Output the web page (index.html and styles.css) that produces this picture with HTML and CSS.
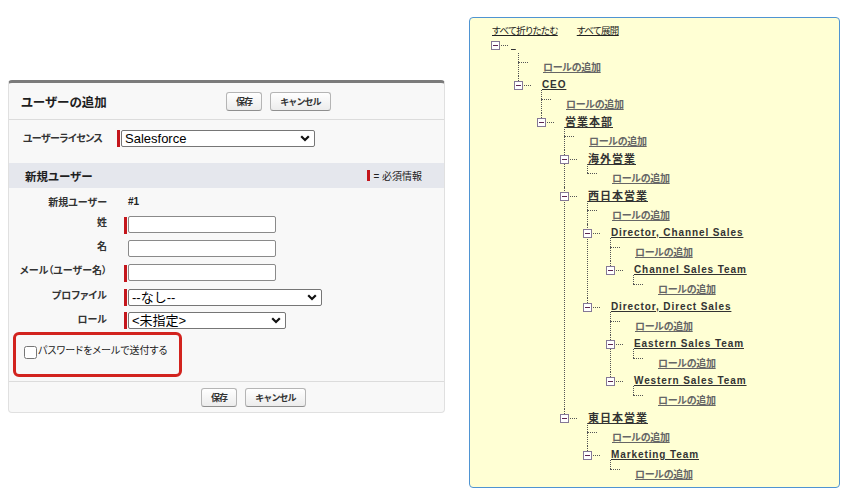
FILE: index.html
```html
<!DOCTYPE html>
<html>
<head>
  <meta charset="UTF-8">
  <title>ユーザーの追加</title>
  <link rel="stylesheet" href="styles.css">
</head>
<body>
  <div class="page">
    <div class="panel">
      <div class="panel-head">
        <h2 class="panel-title">ユーザーの追加</h2>
        <div class="btns">
          <button class="btn">保存</button>
          <button class="btn">キャンセル</button>
        </div>
      </div>

      <div class="license-row">
        <label class="license-label">ユーザーライセンス</label>
        <div class="val">
          <div class="select w-license">
            <select><option>Salesforce</option></select>
            <svg class="chev" width="10" height="7" viewBox="0 0 10 7"><path d="M1.2 1.2l3.8 3.8 3.8-3.8" fill="none" stroke="#111" stroke-width="2.2"/></svg>
          </div>
        </div>
      </div>

      <div class="section-bar">
        <h3>新規ユーザー</h3>
        <span class="legend"><i class="legend-bar"></i>= 必須情報</span>
      </div>

      <div class="fields">
        <div class="lbl first">新規ユーザー</div>
        <div class="val opt"><span class="num">#1</span></div>

        <div class="lbl">姓</div>
        <div class="val"><input type="text" class="text"></div>

        <div class="lbl">名</div>
        <div class="val opt"><input type="text" class="text"></div>

        <div class="lbl">メール（ユーザー名）</div>
        <div class="val"><input type="text" class="text"></div>

        <div class="lbl sel">プロファイル</div>
        <div class="val">
          <div class="select w-profile">
            <select><option>--なし--</option></select>
            <svg class="chev" width="10" height="7" viewBox="0 0 10 7"><path d="M1.2 1.2l3.8 3.8 3.8-3.8" fill="none" stroke="#111" stroke-width="2.2"/></svg>
          </div>
        </div>

        <div class="lbl sel">ロール</div>
        <div class="val">
          <div class="select w-role">
            <select><option>&lt;未指定&gt;</option></select>
            <svg class="chev" width="10" height="7" viewBox="0 0 10 7"><path d="M1.2 1.2l3.8 3.8 3.8-3.8" fill="none" stroke="#111" stroke-width="2.2"/></svg>
          </div>
        </div>
      </div>

      <div class="mail-box">
        <label class="check"><input type="checkbox">パスワードをメールで送付する</label>
      </div>

      <div class="panel-foot">
        <button class="btn">保存</button>
        <button class="btn">キャンセル</button>
      </div>
    </div>

    <div class="tree-panel">
      <div class="tree-links">
        <a href="#">すべて折りたたむ</a>
        <a href="#">すべて展開</a>
      </div>

      <ul class="tree">
        <li class="root">
          <div class="node"><span class="toggle"></span><a class="name blank" href="#">&nbsp;</a></div>
          <ul>
            <li class="leaf"><a class="add" href="#">ロールの追加</a></li>
            <li>
              <div class="node"><span class="toggle"></span><a class="name" href="#">CEO</a></div>
              <ul>
                <li class="leaf"><a class="add" href="#">ロールの追加</a></li>
                <li>
                  <div class="node"><span class="toggle"></span><a class="name jp" href="#">営業本部</a></div>
                  <ul>
                    <li class="leaf"><a class="add" href="#">ロールの追加</a></li>
                    <li>
                      <div class="node"><span class="toggle"></span><a class="name jp" href="#">海外営業</a></div>
                      <ul>
                        <li class="leaf"><a class="add" href="#">ロールの追加</a></li>
                      </ul>
                    </li>
                    <li>
                      <div class="node"><span class="toggle"></span><a class="name jp" href="#">西日本営業</a></div>
                      <ul>
                        <li class="leaf"><a class="add" href="#">ロールの追加</a></li>
                        <li>
                          <div class="node"><span class="toggle"></span><a class="name" href="#">Director, Channel Sales</a></div>
                          <ul>
                            <li class="leaf"><a class="add" href="#">ロールの追加</a></li>
                            <li>
                              <div class="node"><span class="toggle"></span><a class="name" href="#">Channel Sales Team</a></div>
                              <ul>
                                <li class="leaf"><a class="add" href="#">ロールの追加</a></li>
                              </ul>
                            </li>
                          </ul>
                        </li>
                        <li>
                          <div class="node"><span class="toggle"></span><a class="name" href="#">Director, Direct Sales</a></div>
                          <ul>
                            <li class="leaf"><a class="add" href="#">ロールの追加</a></li>
                            <li>
                              <div class="node"><span class="toggle"></span><a class="name" href="#">Eastern Sales Team</a></div>
                              <ul>
                                <li class="leaf"><a class="add" href="#">ロールの追加</a></li>
                              </ul>
                            </li>
                            <li>
                              <div class="node"><span class="toggle"></span><a class="name" href="#">Western Sales Team</a></div>
                              <ul>
                                <li class="leaf"><a class="add" href="#">ロールの追加</a></li>
                              </ul>
                            </li>
                          </ul>
                        </li>
                      </ul>
                    </li>
                    <li>
                      <div class="node"><span class="toggle"></span><a class="name jp" href="#">東日本営業</a></div>
                      <ul>
                        <li class="leaf"><a class="add" href="#">ロールの追加</a></li>
                        <li>
                          <div class="node"><span class="toggle"></span><a class="name" href="#">Marketing Team</a></div>
                          <ul>
                            <li class="leaf"><a class="add" href="#">ロールの追加</a></li>
                          </ul>
                        </li>
                      </ul>
                    </li>
                  </ul>
                </li>
              </ul>
            </li>
          </ul>
        </li>
      </ul>
    </div>
  </div>
</body>
</html>
```

FILE: styles.css
```css
body {
  margin: 0;
  background: #fff;
  font-family: "Liberation Sans", "Noto Sans CJK JP", sans-serif;
  font-feature-settings: "palt";
  color: #222;
}
.page {
  display: flex;
  align-items: flex-start;
  padding: 17px 0 0 8px;
}

/* left form panel */
.panel {
  width: 437px;
  margin-top: 63px;
  box-sizing: border-box;
  background: #f8f8f8;
  border: 1px solid #e0e0e0;
  border-top: 3px solid #7b7b7b;
  border-radius: 4px;
}
.panel-head {
  display: flex;
  align-items: center;
  height: 36px;
  padding-left: 12px;
  border-bottom: 1px solid #dcdcdc;
}
.panel-title {
  width: 205px;
  margin: 0;
  font-size: 12.5px;
  font-weight: bold;
  color: #1e1e1e;
}
.btns {
  display: flex;
  gap: 8px;
}
.btn {
  height: 19px;
  padding: 0 9px;
  font-family: inherit;
  font-size: 9px;
  font-weight: bold;
  letter-spacing: -0.9px;
  color: #333;
  background: linear-gradient(#ffffff, #ececec);
  border: 1px solid #b5b5b5;
  border-bottom-color: #8f8f8f;
  border-radius: 3px;
}
.license-row {
  display: flex;
  align-items: center;
  height: 43px;
  box-sizing: border-box;
  padding: 10px 0 16px 14px;
}
.license-label {
  width: 94px;
  font-size: 10px;
  font-weight: bold;
  letter-spacing: -0.6px;
  color: #333;
  padding-bottom: 3px;
}
.section-bar {
  display: flex;
  align-items: center;
  justify-content: space-between;
  height: 25px;
  padding: 0 22px 0 16px;
  background: #e5e7ed;
}
.section-bar h3 {
  margin: 0;
  font-size: 11.5px;
  font-weight: bold;
  color: #1e1e1e;
}
.legend {
  display: flex;
  align-items: center;
  font-size: 10px;
  color: #222;
}
.legend-bar {
  width: 3px;
  height: 11px;
  margin-right: 3px;
  background: #c4161c;
}
.fields {
  display: grid;
  grid-template-columns: 98px 1fr;
  column-gap: 17px;
  grid-template-rows: 24px 24px 24px 24px 24px 23px;
  align-items: center;
  margin-top: 1px;
}
.lbl {
  text-align: right;
  font-size: 10px;
  font-weight: bold;
  color: #333;
  padding-bottom: 8px;
}
.lbl.sel {
  padding-bottom: 5px;
}
.lbl.first {
  padding-bottom: 0;
}
.val {
  display: flex;
  align-items: center;
}
.val::before {
  content: "";
  width: 3px;
  height: 17px;
  margin-right: 1px;
  background: #c4161c;
}
.val.opt::before {
  background: transparent;
}
.num {
  font-size: 10px;
  font-weight: bold;
  color: #222;
}
.text {
  width: 148px;
  height: 17px;
  box-sizing: border-box;
  margin: -1px 0 0;
  border: 1px solid #8a8a8a;
  border-radius: 2px;
  background: #fff;
}
.select {
  position: relative;
  display: flex;
}
.select select {
  appearance: none;
  height: 17px;
  box-sizing: border-box;
  margin: 0;
  padding: 0 0 0 3px;
  font-family: "Liberation Sans", "Noto Sans CJK JP", sans-serif;
  font-size: 13px;
  line-height: 15px;
  color: #000;
  background: #fff;
  border: 1px solid #767676;
  border-radius: 2px;
}
.select .chev {
  position: absolute;
  right: 5px;
  top: 5px;
  pointer-events: none;
}
.w-license select { width: 194px; }
.w-profile select { width: 194px; }
.w-role select { width: 158px; }
.mail-box {
  width: 169px;
  height: 45px;
  box-sizing: border-box;
  margin: 0 0 4px 4px;
  padding: 9px 0 0 8px;
  border: 3px solid #d2231e;
  border-radius: 6px;
}
.check {
  display: flex;
  align-items: flex-start;
  line-height: 13px;
  font-size: 10px;
  color: #222;
}
.check input {
  width: 13px;
  height: 13px;
  margin: 2px 1px 0 0;
}
.panel-foot {
  display: flex;
  gap: 8px;
  padding: 6px 0 5px 192px;
  border-top: 1px solid #dcdcdc;
}

/* right tree panel */
.tree-panel {
  width: 371px;
  height: 471px;
  box-sizing: border-box;
  margin-left: 24px;
  padding: 6px 0 0 21px;
  background: #ffffd4;
  border: 1px solid #4f94d2;
  border-radius: 4px;
}
.tree-links {
  display: flex;
  gap: 19px;
  height: 13px;
  line-height: 13px;
  padding-left: 1px;
  font-size: 9.5px;
  letter-spacing: -0.6px;
}
.tree-links a {
  color: #222;
}
.tree,
.tree ul {
  list-style: none;
  margin: 0;
  padding: 0;
}
.tree {
  margin-top: -1px;
}
.tree ul {
  margin-left: 23px;
}
.tree li {
  position: relative;
}
.tree ul > li::before {
  content: "";
  position: absolute;
  left: 4px;
  top: 0;
  bottom: 0;
  border-left: 1px dotted #555;
}
.tree ul > li:first-child::before {
  top: -5px;
}
.tree ul > li:last-child::before {
  bottom: auto;
  height: 9px;
}
.node {
  display: flex;
  align-items: flex-start;
  height: 19px;
  line-height: 18px;
}
.root > .node {
  height: 22px;
}
.toggle {
  position: relative;
  z-index: 1;
  flex: none;
  width: 9px;
  height: 9px;
  box-sizing: border-box;
  margin-top: 5px;
  background: #fff;
  border: 1px solid #857896;
}
.toggle::before {
  content: "";
  position: absolute;
  left: 1px;
  top: 3px;
  width: 5px;
  height: 1px;
  background: #5e2650;
}
.toggle::after {
  content: "";
  position: absolute;
  left: 9px;
  top: 3px;
  width: 7px;
  border-top: 1px dotted #555;
}
.name {
  margin-left: 19px;
  font-size: 10px;
  font-weight: bold;
  letter-spacing: 0.9px;
  color: #333;
}
.name.jp {
  font-size: 11px;
  letter-spacing: 1px;
}
.name.blank {
  margin-left: 11px;
  letter-spacing: 2px;
}
.leaf {
  height: 18px;
  line-height: 15px;
  padding-left: 29px;
  box-sizing: border-box;
}
.leaf::after {
  content: "";
  position: absolute;
  left: 4px;
  top: 4px;
  width: 10px;
  border-top: 1px dotted #555;
}
.add {
  font-size: 10px;
  font-weight: bold;
  letter-spacing: -0.3px;
  color: #666;
}
```
